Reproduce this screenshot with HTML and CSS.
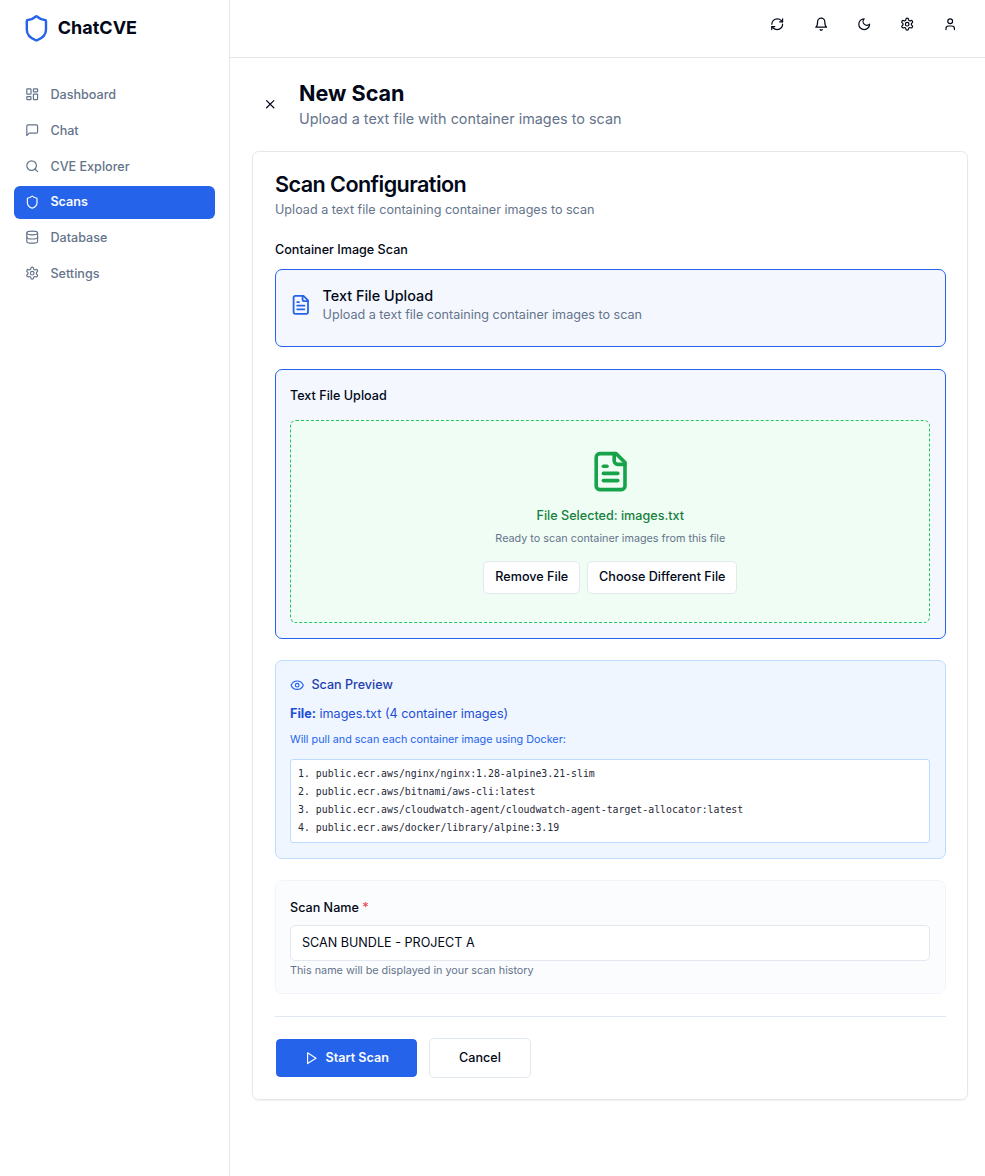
FILE: index.html
```html
<!DOCTYPE html>
<html lang="en">
<head>
<meta charset="utf-8">
<title>ChatCVE</title>
<link rel="stylesheet" href="styles.css">
</head>
<body>
<svg class="sprite" aria-hidden="true">
  <symbol id="shield" viewBox="0 0 24 24"><path d="M20 13c0 5-3.500 7.500-7.660 8.950a1 1 0 0 1-.670-.010C7.500 20.500 4 18 4 13V6a1 1 0 0 1 1-1c2 0 4.500-1.200 6.240-2.720a1.170 1.170 0 0 1 1.520 0C14.510 3.810 17 5 19 5a1 1 0 0 1 1 1z"/></symbol>
  <symbol id="dashboard" viewBox="0 0 24 24"><rect x="3" y="3" width="7" height="9" rx="1"/><rect x="14" y="3" width="7" height="5" rx="1"/><rect x="14" y="12" width="7" height="9" rx="1"/><rect x="3" y="16" width="7" height="5" rx="1"/></symbol>
  <symbol id="chat" viewBox="0 0 24 24"><path d="M21 15a2 2 0 0 1-2 2H7l-4 4V5a2 2 0 0 1 2-2h14a2 2 0 0 1 2 2z"/></symbol>
  <symbol id="search" viewBox="0 0 24 24"><circle cx="11" cy="11" r="8"/><path d="m21 21-4.300-4.300"/></symbol>
  <symbol id="database" viewBox="0 0 24 24"><ellipse cx="12" cy="5" rx="9" ry="3"/><path d="M3 5v14a9 3 0 0 0 18 0V5"/><path d="M3 12a9 3 0 0 0 18 0"/></symbol>
  <symbol id="gear" viewBox="0 0 24 24"><path d="M12.220 2h-.440a2 2 0 0 0-2 2v.180a2 2 0 0 1-1 1.730l-.430.250a2 2 0 0 1-2 0l-.150-.080a2 2 0 0 0-2.730.730l-.220.380a2 2 0 0 0 .730 2.730l.150.100a2 2 0 0 1 1 1.720v.510a2 2 0 0 1-1 1.740l-.150.090a2 2 0 0 0-.730 2.730l.220.380a2 2 0 0 0 2.730.730l.150-.080a2 2 0 0 1 2 0l.430.250a2 2 0 0 1 1 1.730V20a2 2 0 0 0 2 2h.440a2 2 0 0 0 2-2v-.180a2 2 0 0 1 1-1.730l.430-.250a2 2 0 0 1 2 0l.150.080a2 2 0 0 0 2.730-.730l.220-.390a2 2 0 0 0-.730-2.730l-.150-.080a2 2 0 0 1-1-1.740v-.500a2 2 0 0 1 1-1.740l.150-.090a2 2 0 0 0 .730-2.730l-.220-.380a2 2 0 0 0-2.730-.730l-.150.080a2 2 0 0 1-2 0l-.430-.250a2 2 0 0 1-1-1.730V4a2 2 0 0 0-2-2z"/><circle cx="12" cy="12" r="3"/></symbol>
  <symbol id="refresh" viewBox="0 0 24 24"><path d="M3 12a9 9 0 0 1 9-9 9.750 9.750 0 0 1 6.740 2.740L21 8"/><path d="M21 3v5h-5"/><path d="M21 12a9 9 0 0 1-9 9 9.750 9.750 0 0 1-6.740-2.740L3 16"/><path d="M8 16H3v5"/></symbol>
  <symbol id="bell" viewBox="0 0 24 24"><path d="M6 8a6 6 0 0 1 12 0c0 7 3 9 3 9H3s3-2 3-9"/><path d="M10.300 21a1.940 1.940 0 0 0 3.400 0"/></symbol>
  <symbol id="moon" viewBox="0 0 24 24"><path d="M12 3a6 6 0 0 0 9 9 9 9 0 1 1-9-9Z"/></symbol>
  <symbol id="user" viewBox="0 0 24 24"><path d="M19 21v-2a4 4 0 0 0-4-4H9a4 4 0 0 0-4 4v2"/><circle cx="12" cy="7" r="4"/></symbol>
  <symbol id="close" viewBox="0 0 24 24"><path d="M18 6 6 18"/><path d="m6 6 12 12"/></symbol>
  <symbol id="file" viewBox="0 0 24 24"><path d="M15 2H6a2 2 0 0 0-2 2v16a2 2 0 0 0 2 2h12a2 2 0 0 0 2-2V7Z"/><path d="M14 2v4a2 2 0 0 0 2 2h4"/><path d="M10 9H8"/><path d="M16 13H8"/><path d="M16 17H8"/></symbol>
  <symbol id="eye" viewBox="0 0 24 24"><path d="M2.062 12.348a1 1 0 0 1 0-.696 10.750 10.750 0 0 1 19.876 0 1 1 0 0 1 0 .696 10.750 10.750 0 0 1-19.876 0"/><circle cx="12" cy="12" r="3"/></symbol>
  <symbol id="play" viewBox="0 0 24 24"><polygon points="6 3 20 12 6 21 6 3"/></symbol>
</svg>

<div class="app">
  <aside class="sidebar">
    <div class="brand">
      <svg class="icon brand-icon"><use href="#shield"/></svg>
      <span class="brand-name">ChatCVE</span>
    </div>
    <nav class="nav">
      <a class="nav-item"><svg class="icon"><use href="#dashboard"/></svg><span>Dashboard</span></a>
      <a class="nav-item"><svg class="icon"><use href="#chat"/></svg><span>Chat</span></a>
      <a class="nav-item"><svg class="icon"><use href="#search"/></svg><span>CVE Explorer</span></a>
      <a class="nav-item active"><svg class="icon"><use href="#shield"/></svg><span>Scans</span></a>
      <a class="nav-item"><svg class="icon"><use href="#database"/></svg><span>Database</span></a>
      <a class="nav-item"><svg class="icon"><use href="#gear"/></svg><span>Settings</span></a>
    </nav>
  </aside>

  <div class="page">
    <header class="topbar">
      <svg class="icon"><use href="#refresh"/></svg>
      <svg class="icon"><use href="#bell"/></svg>
      <svg class="icon"><use href="#moon"/></svg>
      <svg class="icon"><use href="#gear"/></svg>
      <svg class="icon"><use href="#user"/></svg>
    </header>

    <main class="main">
      <div class="page-head">
        <button class="close"><svg class="icon"><use href="#close"/></svg></button>
        <div>
          <h1 class="title">New Scan</h1>
          <p class="subtitle">Upload a text file with container images to scan</p>
        </div>
      </div>

      <section class="card">
        <h2 class="card-title">Scan Configuration</h2>
        <p class="card-sub">Upload a text file containing container images to scan</p>

        <div class="label type-label">Container Image Scan</div>
        <div class="option">
          <svg class="icon option-icon"><use href="#file"/></svg>
          <div>
            <div class="option-title">Text File Upload</div>
            <div class="option-sub">Upload a text file containing container images to scan</div>
          </div>
        </div>

        <div class="upload">
          <div class="label">Text File Upload</div>
          <div class="dropzone">
            <svg class="icon drop-icon"><use href="#file"/></svg>
            <div class="drop-title">File Selected: images.txt</div>
            <div class="drop-sub">Ready to scan container images from this file</div>
            <div class="drop-actions">
              <button class="btn-sm remove">Remove File</button>
              <button class="btn-sm choose">Choose Different File</button>
            </div>
          </div>
        </div>

        <div class="preview">
          <div class="preview-head"><svg class="icon"><use href="#eye"/></svg><span>Scan Preview</span></div>
          <div class="preview-file"><strong>File:</strong> images.txt (4 container images)</div>
          <div class="preview-note">Will pull and scan each container image using Docker:</div>
          <div class="image-list">
            <div>1. public.ecr.aws/nginx/nginx:1.28-alpine3.21-slim</div>
            <div>2. public.ecr.aws/bitnami/aws-cli:latest</div>
            <div>3. public.ecr.aws/cloudwatch-agent/cloudwatch-agent-target-allocator:latest</div>
            <div>4. public.ecr.aws/docker/library/alpine:3.19</div>
          </div>
        </div>

        <div class="name-box">
          <label class="label" for="scan-name">Scan Name <span class="required">*</span></label>
          <input class="input" id="scan-name" type="text" value="SCAN BUNDLE - PROJECT A">
          <div class="hint">This name will be displayed in your scan history</div>
        </div>

        <div class="actions">
          <button class="btn primary"><svg class="icon"><use href="#play"/></svg><span>Start Scan</span></button>
          <button class="btn outline">Cancel</button>
        </div>
      </section>
    </main>
  </div>
</div>
</body>
</html>
```
FILE: styles.css
```css
* { box-sizing: border-box; }
html, body { height: 100%; }
body, h1, h2, p { margin: 0; }
body {
  font-family: Inter, "Liberation Sans", sans-serif;
  font-size: 12.6px;
  line-height: 18px;
  color: #020817;
  background: #fff;
  overflow: hidden;
}
button, input { font: inherit; color: inherit; }
.sprite { display: none; }
.icon {
  width: 14.4px;
  height: 14.4px;
  flex: none;
  fill: none;
  stroke: currentColor;
  stroke-width: 2;
  stroke-linecap: round;
  stroke-linejoin: round;
}

.app { display: flex; height: 1176px; }
.sidebar { width: 230px; flex: none; border-right: 1px solid #e5e7eb; }
.brand { display: flex; align-items: center; gap: 7px; height: 56px; padding-left: 22px; }
.brand-icon { width: 28.8px; height: 28.8px; color: #2563eb; }
.brand-name { padding-bottom: 2px; font-size: 18px; font-weight: 700; line-height: 25px; }
.nav { display: flex; flex-direction: column; gap: 3.4px; padding: 22.8px 14px; }
.nav-item {
  display: flex;
  align-items: center;
  gap: 11px;
  height: 32.4px;
  padding: 0 11px;
  border-radius: 6px;
  font-weight: 500;
  color: #64748b;
}
.nav-item .icon { margin-bottom: 1px; }
.nav-item.active { background: #2563eb; color: #f8fafc; font-weight: 600; }

.page { flex: 1; min-width: 0; }
.topbar {
  display: flex;
  align-items: center;
  justify-content: flex-end;
  gap: 28.8px;
  height: 58px;
  padding: 0 27.5px 9px 0;
  border-bottom: 1px solid #e5e7eb;
}
.main { padding: 21px 17px 0 22px; }
.page-head { display: flex; align-items: center; gap: 11px; }
.close {
  display: flex;
  align-items: center;
  justify-content: center;
  width: 36px;
  height: 36px;
  padding: 0 0 1px;
  border: 0;
  background: none;
}
.title { font-size: 21.6px; font-weight: 700; line-height: 28px; }
.subtitle { padding-top: 1px; font-size: 14.4px; line-height: 22px; color: #64748b; }

.card {
  margin-top: 21px;
  height: 949px;
  padding: 21px 21px 0 22px;
  border: 1px solid #e5e7eb;
  border-radius: 7px;
  box-shadow: 0 1px 2px rgba(0, 0, 0, .06);
}
.card-title { font-size: 21.6px; font-weight: 600; line-height: 23px; letter-spacing: -.57px; }
.card-sub { margin-top: 5px; color: #64748b; }
.label { font-weight: 500; }
.type-label { margin-top: 22px; }
.option, .upload, .preview, .name-box { border: 1px solid #2563eb; border-radius: 7px; background: #f4f7fe; }
.option { display: flex; gap: 10.8px; height: 78px; margin-top: 10px; padding: 17px 14.2px; }
.option-icon { width: 21.6px; height: 21.6px; margin-top: 7px; color: #2563eb; }
.option-title { font-size: 14.4px; font-weight: 500; }
.option-sub { margin-top: 1px; color: #64748b; }
.upload { height: 270px; margin-top: 22px; padding: 17px 15px 0 14px; }
.dropzone {
  display: flex;
  flex-direction: column;
  align-items: center;
  height: 203px;
  margin-top: 15px;
  padding: 29px 0 0 .6px;
  border: 1px dashed #22c55e;
  border-radius: 6px;
  background: #f0fdf4;
}
.drop-icon { width: 43.2px; height: 43.2px; color: #16a34a; }
.drop-title { margin-top: 14px; font-weight: 500; color: #15803d; }
.drop-sub { margin-top: 5px; font-size: 10.8px; color: #64748b; }
.drop-actions { display: flex; gap: 7px; margin-top: 13px; }
.btn-sm {
  height: 33px;
  padding: 0 0 2px;
  border: 1px solid #e2e8f0;
  border-radius: 5px;
  background: #fff;
  font-weight: 500;
}
.remove { width: 97px; }
.choose { width: 150px; }

.preview { height: 199px; margin-top: 21px; padding: 15px 15px 0 14px; border-color: #bfdbfe; background: #eff6ff; }
.preview-head { display: flex; align-items: center; gap: 7px; color: #1e40af; font-weight: 500; }
.preview-head .icon { color: #2563eb; }
.preview-file { margin-top: 11px; color: #1d4ed8; }
.preview-note { margin-top: 8px; font-size: 10.8px; color: #2563eb; }
.image-list {
  height: 84px;
  margin-top: 10px;
  padding: 5px 7px;
  border: 1px solid #bfdbfe;
  border-radius: 3px;
  background: #fff;
  font-family: "DejaVu Sans Mono", monospace;
  font-size: 9.87px;
  color: #1f2937;
}

.name-box { height: 114px; margin-top: 21px; padding: 18px 15px 0 14px; border-color: #f1f5f9; background: #fbfcfe; }
.name-box .label { display: block; }
.required { color: #ef4444; }
.input {
  display: block;
  width: 100%;
  height: 36px;
  margin-top: 8px;
  padding: 0 11px 2px;
  border: 1px solid #e2e8f0;
  border-radius: 5px;
  background: #fff;
}
.hint { margin-top: 1px; font-size: 10.8px; color: #64748b; }
.actions { display: flex; gap: 11px; margin-top: 22px; padding-top: 21px; border-top: 1px solid #e2e8f0; }
.btn {
  display: flex;
  align-items: center;
  justify-content: center;
  gap: 7px;
  height: 40px;
  padding: 0;
  border: 1px solid #e2e8f0;
  border-radius: 5px;
  font-weight: 500;
}
.primary { width: 143px; border-color: #fff; background: #2563eb; background-clip: padding-box; color: #f8fafc; font-weight: 600; }
.outline { width: 102px; background: #fff; }
```
